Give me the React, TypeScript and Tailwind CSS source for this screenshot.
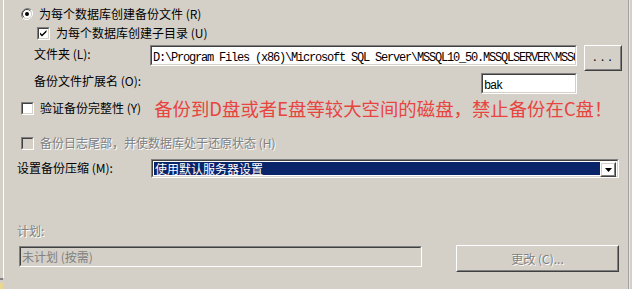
import React from "react";

const FONT = { fontFamily: '"Noto Sans CJK SC", "Liberation Sans", sans-serif' };
const MONO = { fontFamily: '"Liberation Mono", "DejaVu Sans Mono", monospace' };

function Sunken({ className = "", innerClass = "", children }: { className?: string; innerClass?: string; children?: React.ReactNode }) {
  return (
    <div className={`border border-t-[#808080] border-l-[#808080] border-b-white border-r-white ${className}`}>
      <div className={`h-full w-full border border-t-[#404040] border-l-[#404040] border-b-[#d4d0c8] border-r-[#d4d0c8] ${innerClass}`}>
        {children}
      </div>
    </div>
  );
}

function Raised({ className = "", innerClass = "", children }: { className?: string; innerClass?: string; children?: React.ReactNode }) {
  return (
    <div className={`border border-t-white border-l-white border-b-[#404040] border-r-[#404040] ${className}`}>
      <div className={`h-full w-full border border-t-[#d4d0c8] border-l-[#d4d0c8] border-b-[#808080] border-r-[#808080] ${innerClass}`}>
        {children}
      </div>
    </div>
  );
}

function CheckBox({ checked = false, disabled = false }: { checked?: boolean; disabled?: boolean }) {
  return (
    <Sunken className="h-[13px] w-[13px] shrink-0" innerClass={disabled ? "bg-[#d4d0c8]" : "bg-white"}>
      {checked && (
        <svg width="9" height="9" viewBox="0 0 9 9" className="block">
          <path d="M1 3.5 L3 5.5 L7.5 1 L7.5 3 L3 7.5 L1 5.5 Z" fill="#000" />
        </svg>
      )}
    </Sunken>
  );
}

function Radio() {
  return (
    <svg width="12" height="12" viewBox="0 0 12 12" className="shrink-0">
      <path d="M10.2 1.8 A6 6 0 0 0 1.8 10.2" stroke="#808080" strokeWidth="1" fill="none" />
      <path d="M1.8 10.2 A6 6 0 0 0 10.2 1.8" stroke="#ffffff" strokeWidth="1" fill="none" />
      <circle cx="6" cy="6" r="4.5" fill="#fff" />
      <path d="M9.2 2.8 A4.5 4.5 0 0 0 2.8 9.2" stroke="#404040" strokeWidth="1" fill="none" />
      <path d="M2.8 9.2 A4.5 4.5 0 0 0 9.2 2.8" stroke="#d4d0c8" strokeWidth="1" fill="none" />
      <circle cx="6" cy="6" r="2" fill="#000" />
    </svg>
  );
}

const disabledText = "text-[#808080] [text-shadow:1px_1px_0_#ffffff]";

export default function App() {
  return (
    <div className="relative flex h-[289px] w-[632px] overflow-hidden bg-[#d4d0c8] text-[12px] text-black" style={FONT}>
      {/* left edge */}
      <div className="flex w-[5px] shrink-0 flex-col">
        <div className="flex h-[278px]">
          <div className="w-[3px] bg-[#d4d0c8]" />
          <div className="w-[1px] bg-white" />
        </div>
        <div className="h-[2px] w-[3px] bg-[#808080]" />
        <div className="mt-[3px] h-[6px] w-[3px] bg-[#e8d890]" />
      </div>

      <div className="flex w-[622px] flex-col">
        {/* row 1 radio */}
        <div className="mt-[5px] flex h-[18px] items-center pl-[16px]">
          <Radio />
          <span className="ml-[6px] leading-none">为每个数据库创建备份文件 (R)</span>
        </div>
        {/* row 2 checkbox */}
        <div className="mt-[1px] flex h-[18px] items-center pl-[32px]">
          <CheckBox checked />
          <span className="ml-[6px] leading-none">为每个数据库创建子目录 (U)</span>
        </div>
        {/* row 3 folder */}
        <div className="mt-[3px] flex h-[26px] items-start">
          <span className="ml-[29px] mt-[2px] w-[116px] leading-[14px]">文件夹 (L):</span>
          <Sunken className="h-[21px] w-[427px]" innerClass="bg-white overflow-hidden whitespace-nowrap pl-[1px] leading-[17px]">
            <span style={MONO} className="text-[12px] tracking-[-1.2px]">D:\Program Files (x86)\Microsoft SQL Server\MSSQL10_50.MSSQLSERVER\MSSQ</span>
          </Sunken>
          <Raised className="ml-[7px] h-[26px] w-[38px]" innerClass="flex items-center justify-center">
            <span className="text-[11px] leading-none tracking-[1px]" style={MONO}>...</span>
          </Raised>
        </div>
        {/* row 4 extension */}
        <div className="mt-[2px] flex h-[21px] items-start">
          <span className="ml-[29px] mt-[1px] leading-[14px]">备份文件扩展名 (O):</span>
          <Sunken className="ml-auto mr-[50px] h-[21px] w-[96px]" innerClass="bg-white pl-[1px] leading-[17px]">
            <span style={MONO} className="text-[12px] tracking-[-1.2px]">bak</span>
          </Sunken>
        </div>
        {/* row 5 verify */}
        <div className="mt-[5px] flex h-[18px] items-center pl-[16px]">
          <CheckBox />
          <span className="ml-[6px] leading-none">验证备份完整性 (Y)</span>
          <span className="ml-[13px] whitespace-nowrap text-[18.4px] leading-none text-[#e84440]">
            备份到D盘或者E盘等较大空间的磁盘，禁止备份在C盘！
          </span>
        </div>
        {/* row 6 disabled */}
        <div className="mt-[17px] flex h-[18px] items-center pl-[16px]">
          <CheckBox disabled />
          <span className={`ml-[6px] leading-none ${disabledText}`}>备份日志尾部，并使数据库处于还原状态 (H)</span>
        </div>
        {/* row 7 compression */}
        <div className="mt-[7px] flex h-[19px] items-start">
          <span className="ml-[12px] mt-[2px] w-[134px] leading-[14px]">设置备份压缩 (M):</span>
          <Sunken className="h-[19px] w-[468px]" innerClass="flex bg-white p-[1px]">
            <div className="flex flex-1 items-center bg-[#0a246a] pl-[1px] leading-none text-white">
              使用默认服务器设置
            </div>
            <Raised className="h-[15px] w-[16px]" innerClass="flex items-center justify-center">
              <svg width="7" height="4" viewBox="0 0 7 4"><path d="M0 0 H7 L3.5 4 Z" fill="#000" /></svg>
            </Raised>
          </Sunken>
        </div>
        {/* row 8 plan label */}
        <div className="mt-[45px] flex h-[16px] items-center pl-[12px]">
          <span className={`leading-none ${disabledText}`}>计划:</span>
        </div>
        {/* row 9 schedule */}
        <div className="mt-[6px] flex h-[27px] items-start">
          <Sunken className="ml-[14px] mt-[1px] h-[21px] w-[403px]" innerClass="flex items-center pl-[1px]">
            <span className="leading-none text-[#808080]">未计划 (按需)</span>
          </Sunken>
          <Raised className="ml-[34px] h-[27px] w-[163px]" innerClass="flex items-center justify-center">
            <span className={`leading-none ${disabledText}`}>更改 (C)...</span>
          </Raised>
        </div>
      </div>

      {/* right edge */}
      <div className="flex w-[5px] shrink-0">
        <div className="w-[1px] bg-[#d4d0c8]" />
        <div className="w-[1px] bg-[#a0a0a0]" />
        <div className="w-[1px] bg-[#e8e6e2]" />
      </div>
    </div>
  );
}
